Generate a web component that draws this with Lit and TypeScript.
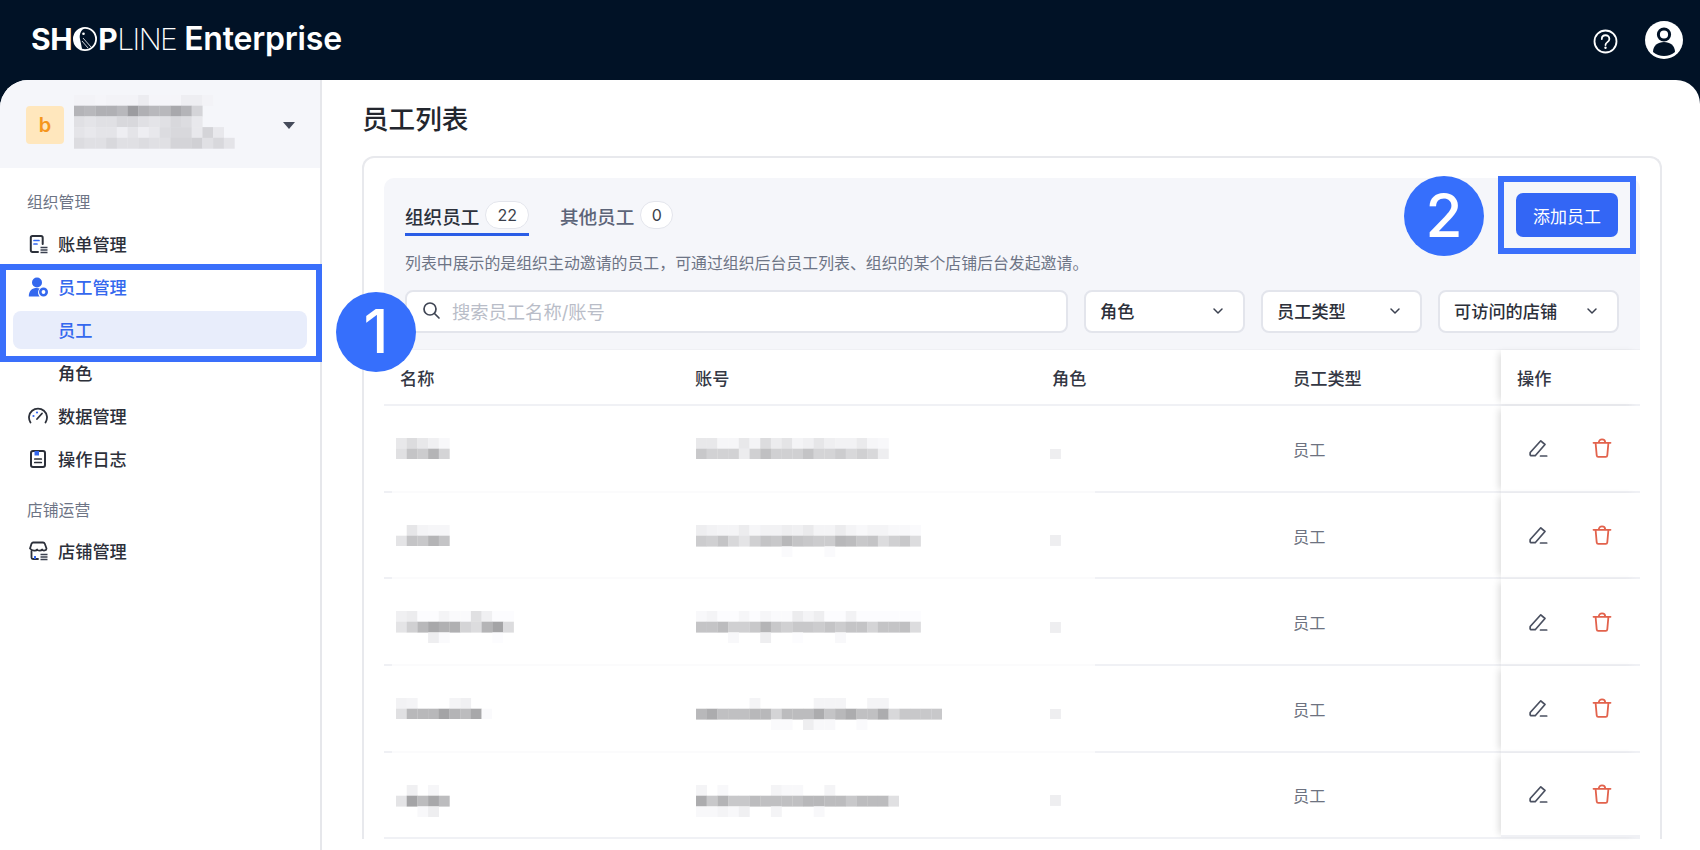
import { LitElement, html, css, svg } from "lit";
import { customElement } from "lit/decorators.js";

const CELL = 10.7;

function mosaic(rows: string[], tint = 2) {
  const cols = Math.max(...rows.map((r) => r.split(" ").length));
  const w = cols * CELL;
  const h = rows.length * CELL;
  return html`<svg class="mosaic" width=${w} height=${h} viewBox="0 0 ${w} ${h}" aria-hidden="true">
    ${rows.map((r, y) =>
      r.split(" ").map((v, x) => {
        if (v === "ff" || v === "--") return svg``;
        const n = parseInt(v, 16);
        const blue = Math.min(255, n + tint);
        return svg`<rect x=${x * CELL} y=${y * CELL} width=${CELL + 0.2} height=${CELL + 0.2} fill="rgb(${n},${n},${blue})"></rect>`;
      })
    )}
  </svg>`;
}

const ORG = [
  "f3 f3 f5 f3 f3 f3 ec f5 f5 f5 ee ee f3",
  "b4 b8 b0 b0 b8 9c b0 b8 b8 a8 b4 d4",
  "e0 e4 e0 e0 d8 d8 e0 e4 e0 d8 dc e8",
  "e4 e8 e4 e4 ee e4 ee e8 dc d8 d8 e8 d4 e8",
  "dc e0 e0 d8 e0 e0 dc e0 e0 d4 d4 d0 e0 d8 e4",
];

const ROWS = [
  {
    name: ["e8 dc e8 f0 f8", "e0 c4 cc b4 d4"],
    acct: [
      "e8 e8 f6 f6 e8 f4 dc ec e4 f4 f0 e6 ef f2 f2 ea f6 f8",
      "c8 d2 d2 d2 ec d0 c0 d0 d0 d0 c4 d4 d4 cc d8 d0 d8 ee",
    ],
  },
  {
    name: ["ff e6 f4 f6 f6", "e4 c4 c8 b4 c4"],
    acct: [
      "ee f2 f4 f4 ec f6 f2 f2 ee f0 ea f4 f4 ec f4 f8 f4 f4 f8 f8 fa",
      "cc d0 c4 d8 e4 d0 c4 c8 b8 c4 c8 cc cc b8 bc c8 c4 dc d0 c8 dc",
      "ff ff ff ff ff ff ff ff fa ff ff ff fa ff ff ff ff ff ff ff ff",
    ],
  },
  {
    name: [
      "f0 ec fc fc f4 fa fa e0 f0 fc fc",
      "e4 d0 b8 a8 b0 b0 d4 dc b4 a4 dc",
      "ff ff ff ee fa ff ff ff ff fc ff",
    ],
    acct: [
      "f8 f4 fc fc f6 fc f6 fa fa ec f4 ee fc fc f2 fc fc fc fc fc fc",
      "c4 c4 bc d0 d0 c8 b4 c8 d0 c8 c8 cc c4 cc c4 c4 d4 c4 c4 c0 dc",
      "ff ff ff f8 ff ff ee ff ff fc ff ff ff f8 ff ff ff ff ff ff ff",
    ],
  },
  {
    name: ["f2 f4 ff ff ff f4 f0 ff ff", "e0 b8 b8 b8 a4 b4 bc a8 fa"],
    acct: [
      "ff ff ff ff ff f4 ff ff ff ff ff f4 f4 f4 ff ff f4 f4 ff ff ff ff ff",
      "b8 ac c0 c0 c0 b8 b8 d4 bc bc bc ac c4 b8 ac c0 c0 ac d8 c8 c8 c8 c8",
      "ff ff ff ff ff ff ff fa fa ff ee f8 f8 ff ff fa ff ff ff ff ff ff ff",
    ],
  },
  {
    name: ["ff f0 ff f6 ff", "e4 a4 bc a8 bc", "ff ff f8 ee ff"],
    acct: [
      "f4 ff f8 ff ff ff ff f4 f8 f8 ff ff f4 ff ff ff ff ff ff",
      "ac c8 b4 c8 c8 bc c0 c0 c0 c0 b8 b8 bc bc c8 bc bc bc e0",
      "f8 f8 f4 f8 f0 ff ff f4 ff ff ff f8 ff ff ff ff ff ff ff",
    ],
  },
];

const chevron = html`<svg class="chev" width="12" height="8" viewBox="0 0 12 8" aria-hidden="true">
  <path d="M2 2l4 4 4-4" fill="none" stroke="#3b4150" stroke-width="1.5" stroke-linecap="round" stroke-linejoin="round"></path>
</svg>`;

const editIcon = html`<svg width="20" height="20" viewBox="0 0 20 20" aria-hidden="true">
  <path d="M2.200 14.500 12.800 2.800l4.200 3.700-9.800 11.200H3.400c-.8 0-1.300-.5-1.300-1.200z" fill="none" stroke="#4a5060" stroke-width="1.700" stroke-linejoin="round"></path>
  <path d="M12.500 18h6.200" stroke="#4a5060" stroke-width="1.700" stroke-linecap="round"></path>
</svg>`;

const trashIcon = html`<svg width="20" height="20" viewBox="0 0 20 20" aria-hidden="true">
  <path d="M1.500 4.800h17M6.800 4.600c0-4.400 6.400-4.400 6.400 0M3.600 5l1.100 12.400c.1.900.6 1.400 1.500 1.400h7.600c.9 0 1.400-.5 1.500-1.400L16.400 5" fill="none" stroke="#e2624c" stroke-width="1.800" stroke-linecap="round" stroke-linejoin="round"></path>
</svg>`;

@customElement("app-root")
export class AppRoot extends LitElement {
  static styles = css`
    :host {
      display: block;
      position: relative;
      width: 1700px;
      height: 850px;
      overflow: hidden;
      background: #011226;
      color: #2c303a;
      font-family: Inter, "Noto Sans CJK SC", sans-serif;
    }
    .top {
      height: 80px;
      display: flex;
      align-items: center;
      justify-content: space-between;
      padding: 0 17px 0 31px;
      box-sizing: border-box;
    }
    .logo {
      display: flex;
      align-items: center;
      color: #fff;
      font-size: 30px;
      line-height: 1;
      letter-spacing: -0.4px;
      font-weight: 700;
      margin-top: -3px;
    }
    .logo .o { margin: 0 1px; }
    .logo .thin { font-weight: 200; letter-spacing: -1.6px; }
    .logo .ent { font-size: 32px; font-weight: 600; margin-left: 8px; letter-spacing: -0.2px; }
    .top-right { display: flex; align-items: center; gap: 27px; }
    .help { margin-top: 3px; }
    .shell {
      height: 770px;
      display: flex;
      background: #fff;
      border-radius: 28px 24px 0 0;
      overflow: hidden;
    }
    .side {
      width: 322px;
      flex: none;
      box-sizing: border-box;
      border-right: 2px solid #e6e7eb;
    }
    .org {
      height: 88px;
      background: #f5f6fa;
      display: flex;
      align-items: center;
      padding: 0 26px;
      box-sizing: border-box;
    }
    .avatar {
      width: 38px;
      height: 38px;
      flex: none;
      border-radius: 4px;
      background: #ffe7bd;
      color: #f5961d;
      font-size: 20px;
      font-weight: 600;
      display: flex;
      align-items: center;
      justify-content: center;
      margin-top: 2px;
    }
    .org .mosaic { margin-left: 10px; margin-top: -4px; }
    .caret {
      margin-left: auto;
      margin-right: -1px;
      width: 0;
      height: 0;
      border-left: 6px solid transparent;
      border-right: 6px solid transparent;
      border-top: 7px solid #454b5a;
      margin-top: 2px;
    }
    nav { padding-top: 15px; display: flex; flex-direction: column; }
    .label {
      height: 39px;
      line-height: 40px;
      padding-left: 27px;
      font-size: 15.8px;
      color: #6d7485;
    }
    .label.next { margin-top: 10px; line-height: 42px; }
    .item {
      height: 38px;
      margin: 2.5px 13px;
      padding-left: 15px;
      display: flex;
      align-items: center;
      gap: 10px;
      font-size: 17.2px;
      font-weight: 500;
      color: #2c303a;
      border-radius: 8px;
    }
    .item svg { flex: none; }
    .item.sub { padding-left: 45px; }
    .item.blue { color: #3468ee; }
    .item.current { background: #e8edfb; }
    main {
      flex: 1;
      min-width: 0;
      padding: 0 38px 0 40px;
    }
    h1 {
      margin: 0;
      height: 76px;
      line-height: 78px;
      font-size: 26.6px;
      font-weight: 500;
      color: #23262e;
    }
    .card {
      border: 2px solid #e8e9ed;
      border-bottom: 0;
      border-radius: 12px 12px 0 0;
      padding: 20px 20px 0;
    }
    .panel {
      background: #f5f6fa;
      border-radius: 10px 10px 0 0;
      border-bottom: 1px solid #eff0f4;
      padding: 22px 21px 16px;
    }
    .panel-head { display: flex; justify-content: space-between; align-items: flex-start; height: 35px; }
    .tabs { display: flex; gap: 31px; }
    .tab {
      display: flex;
      align-items: center;
      gap: 6px;
      height: 36px;
      padding-bottom: 6px;
      font-size: 18.6px;
      color: #5c6478;
      font-weight: 500;
      box-sizing: border-box;
    }
    .tab.on { color: #2c303a; border-bottom: 3px solid #2a5de6; padding-bottom: 3px; }
    .count {
      height: 28px;
      min-width: 33px;
      padding: 0 11px;
      box-sizing: border-box;
      border-radius: 14px;
      border: 1.5px solid #e3e5ec;
      background: #fff;
      color: #3a3f4b;
      font-size: 16px;
      font-weight: 400;
      display: flex;
      align-items: center;
      justify-content: center;
    }
    .count.one { padding: 0; }
    button {
      font: inherit;
      width: 102px;
      height: 44px;
      margin-top: -7px;
      margin-right: 1px;
      border: 0;
      border-radius: 7px;
      background: #3366f5;
      color: #fff;
      font-size: 17px;
      padding: 0;
    }
    .desc {
      margin-top: 17px;
      line-height: 24px;
      font-size: 15.9px;
      color: #6d7485;
    }
    .filters { margin-top: 14px; display: flex; gap: 16px; }
    .search, .select {
      height: 43px;
      box-sizing: border-box;
      background: #fff;
      border: 2px solid #e3e5ec;
      border-radius: 8px;
      display: flex;
      align-items: center;
      padding-bottom: 2px;
    }
    .search {
      flex: 1;
      padding-left: 15px;
      gap: 11px;
      font-size: 18.3px;
      color: #b9bdc8;
    }
    .select {
      width: 161px;
      flex: none;
      padding-left: 14px;
      padding-right: 19px;
      justify-content: space-between;
      font-size: 17.2px;
      font-weight: 500;
      color: #2c303a;
    }
    .select.wide { width: 181px; }
    .row {
      display: grid;
      grid-template-columns: 295px 357px 241px 224px 139px;
    }
    .head { height: 56px; border-bottom: 2px solid #f0f1f5; box-sizing: border-box; font-size: 17.2px; font-weight: 500; color: #343844; }
    .head > div { display: flex; align-items: center; padding-left: 16px; }
    .body-row {
      height: 86.7px;
      box-sizing: border-box;
      background: linear-gradient(to right, #eff0f4 8px, #fbfbfc 8px, #fbfbfc 711px, #f0f1f5 711px) left bottom / 100% 2px no-repeat;
    }
    .body-row.last { background: #fff; border-bottom: 2px solid #f0f1f5; }
    .body-row > div { padding-top: 32px; box-sizing: border-box; }
    .c-name { padding-left: 12px; }
    .c-acct { padding-left: 17px; }
    .c-role { padding-left: 14px; }
    .c-role .mosaic { margin-top: 10.7px; }
    .mosaic { display: block; }
    .body-row > .c-type {
      padding: 0 0 1px 16px;
      display: flex;
      align-items: center;
      font-size: 16.2px;
      color: #6d7280;
    }
    .fixed {
      background: #fff;
      box-shadow: -5px 0 7px -3px rgba(0, 0, 0, 0.14);
    }
    .body-row > .fixed {
      padding: 0 0 0 27px;
      display: flex;
      align-items: center;
      gap: 44px;
      border-bottom: 2px solid #f0f1f5;
    }
    .note {
      position: absolute;
      box-sizing: border-box;
      border: 6px solid #3a6ffb;
    }
    .note.menu { left: 0; top: 264px; width: 322px; height: 98px; }
    .note.add { left: 1498px; top: 176px; width: 138px; height: 78px; }
    .pin {
      position: absolute;
      width: 80px;
      height: 80px;
      border-radius: 50%;
      background: #366ffc;
      color: #fff;
      font-family: Inter, sans-serif;
      font-weight: 500;
      font-size: 60px;
      line-height: 78px;
      text-align: center;
    }
    .pin.a { left: 336px; top: 292px; }
    .pin.b { left: 1404px; top: 176px; }
  `;

  render() {
    return html`
      <header class="top">
        <div class="logo">
          <span>SH</span>
          <svg class="o" width="24" height="24" viewBox="0 0 24 24" aria-hidden="true">
            <path fill="#fff" fill-rule="evenodd" d="M12 0a12 12 0 1 0 0 24 12 12 0 0 0 0-24zM12 1.800c5.600 0 10.200 4.600 10.200 10.200S17.600 22.200 12 22.200c-1 0-2-.2-3-.5L7 12C6 8 8 2 12 1.800z"></path>
            <circle cx="10.500" cy="6.800" r="1.300" fill="#fff"></circle>
            <path d="M10 11l8 9M9 14l6 7" stroke="#fff" stroke-width=".8" fill="none"></path>
          </svg>
          <span>P</span><span class="thin">LINE</span>
          <span class="ent">Enterprise</span>
        </div>
        <div class="top-right">
          <svg class="help" width="25" height="25" viewBox="0 0 25 25" aria-hidden="true">
            <circle cx="12.500" cy="12.500" r="11" fill="none" stroke="#fff" stroke-width="1.800"></circle>
            <path d="M8.800 10c0-5 7.600-5 7.600 0 0 3.200-3.900 3-3.900 6" fill="none" stroke="#fff" stroke-width="1.800" stroke-linecap="round"></path>
            <circle cx="12.500" cy="18.700" r="1.200" fill="#fff"></circle>
          </svg>
          <svg width="38" height="38" viewBox="0 0 38 38" aria-hidden="true">
            <circle cx="19" cy="19" r="19" fill="#fff"></circle>
            <circle cx="19" cy="13.500" r="5.600" fill="none" stroke="#011226" stroke-width="3"></circle>
            <path d="M8 31c0-6.500 5-10 11-10s11 3.500 11 10c-3 2.500-7 4-11 4s-8-1.500-11-4z" fill="#011226"></path>
          </svg>
        </div>
      </header>
      <div class="shell">
        <aside class="side">
          <div class="org">
            <div class="avatar">b</div>
            ${mosaic(ORG, 4)}
            <div class="caret"></div>
          </div>
          <nav>
            <div class="label">组织管理</div>
            <div class="item">
              <svg width="20" height="20" viewBox="0 0 20 20" aria-hidden="true">
                <path d="M10 18H4.500C3.400 18 2.800 17.400 2.800 16.300V3.700C2.800 2.600 3.400 2 4.500 2h8.500c1.100 0 1.700.6 1.700 1.700V10" fill="none" stroke="#2c303a" stroke-width="2" stroke-linecap="round"></path>
                <path d="M6 6.500h5M6 10h3" stroke="#3468ee" stroke-width="1.700" stroke-linecap="round"></path>
                <path d="M12.500 13.500h7M12.500 16h7M12.500 18.500h7" stroke="#3b4150" stroke-width="1.500"></path>
              </svg>
              账单管理
            </div>
            <div class="item blue">
              <svg width="20" height="20" viewBox="0 0 20 20" aria-hidden="true">
                <circle cx="9" cy="5.500" r="5" fill="#3468ee"></circle>
                <path d="M.8 19.500c0-6 3.400-8.500 8-8.500 1 0 2 .2 2.900.5-2 2-2.200 5.800-.1 8z" fill="#3468ee"></path>
                <circle cx="15.500" cy="15" r="3.200" fill="none" stroke="#3468ee" stroke-width="2.600"></circle>
              </svg>
              员工管理
            </div>
            <div class="item sub blue current">员工</div>
            <div class="item sub">角色</div>
            <div class="item">
              <svg width="20" height="20" viewBox="0 0 20 20" aria-hidden="true">
                <path d="M2.500 16.500a9 9 0 1 1 15 0" fill="none" stroke="#2c303a" stroke-width="1.800" stroke-linecap="round"></path>
                <path d="M9 13 14 7.500" stroke="#2c303a" stroke-width="1.800" stroke-linecap="round"></path>
                <circle cx="5.500" cy="10" r="1.100" fill="#3468ee"></circle>
                <circle cx="9" cy="6.500" r="1.100" fill="#3468ee"></circle>
              </svg>
              数据管理
            </div>
            <div class="item">
              <svg width="20" height="20" viewBox="0 0 20 20" aria-hidden="true">
                <rect x="3" y="2" width="14" height="16" rx="2" fill="none" stroke="#2c303a" stroke-width="2"></rect>
                <path d="M6.500 2h4.500v4.500H6.500z" fill="#3468ee"></path>
                <path d="M6.800 10h6.500M6.800 13.500h6.500" stroke="#2c303a" stroke-width="1.700" stroke-linecap="round"></path>
              </svg>
              操作日志
            </div>
            <div class="label next">店铺运营</div>
            <div class="item">
              <svg width="20" height="20" viewBox="0 0 20 20" aria-hidden="true">
                <path d="M5 1.500h10c1 0 1.500.4 1.800 1.200L18.500 7.500c0 2.200-3.400 2.700-4.400 1-.8 1.600-4.300 1.600-5 0-.8 1.700-5.200 1.400-7.100-1l1.500-4.800C4 1.900 4.300 1.500 5 1.500z" fill="none" stroke="#2c303a" stroke-width="1.800" stroke-linejoin="round"></path>
                <path d="M3.500 10v6.500c0 1 .5 1.500 1.500 1.500h5" fill="none" stroke="#2c303a" stroke-width="1.800" stroke-linecap="round"></path>
                <path d="M7 15v3" stroke="#3468ee" stroke-width="2"></path>
                <path d="M12.500 13.500h7M12.500 16h7M12.500 18.500h7" stroke="#3b4150" stroke-width="1.500"></path>
              </svg>
              店铺管理
            </div>
          </nav>
        </aside>
        <main>
          <h1>员工列表</h1>
          <section class="card">
            <div class="panel">
              <div class="panel-head">
                <div class="tabs">
                  <div class="tab on">组织员工<span class="count">22</span></div>
                  <div class="tab">其他员工<span class="count one">0</span></div>
                </div>
                <button>添加员工</button>
              </div>
              <div class="desc">列表中展示的是组织主动邀请的员工，可通过组织后台员工列表、组织的某个店铺后台发起邀请。</div>
              <div class="filters">
                <div class="search">
                  <svg width="19" height="19" viewBox="0 0 19 19" aria-hidden="true">
                    <circle cx="8" cy="8" r="6" fill="none" stroke="#3f4554" stroke-width="1.700"></circle>
                    <path d="M12.500 12.500 17 17" stroke="#3f4554" stroke-width="1.700" stroke-linecap="round"></path>
                  </svg>
                  搜索员工名称/账号
                </div>
                <div class="select">角色${chevron}</div>
                <div class="select">员工类型${chevron}</div>
                <div class="select wide">可访问的店铺${chevron}</div>
              </div>
            </div>
            <div class="row head">
              <div>名称</div><div>账号</div><div>角色</div><div>员工类型</div><div class="fixed">操作</div>
            </div>
            ${ROWS.map(
              (r, i) => html`<div class="row body-row ${i === ROWS.length - 1 ? "last" : ""}">
                <div class="c-name">${mosaic(r.name)}</div>
                <div class="c-acct">${mosaic(r.acct)}</div>
                <div class="c-role">${mosaic(["ee"])}</div>
                <div class="c-type">员工</div>
                <div class="fixed">${editIcon}${trashIcon}</div>
              </div>`
            )}
          </section>
        </main>
      </div>
      <div class="note menu"></div>
      <div class="note add"></div>
      <div class="pin a">1</div>
      <div class="pin b">2</div>
    `;
  }
}
